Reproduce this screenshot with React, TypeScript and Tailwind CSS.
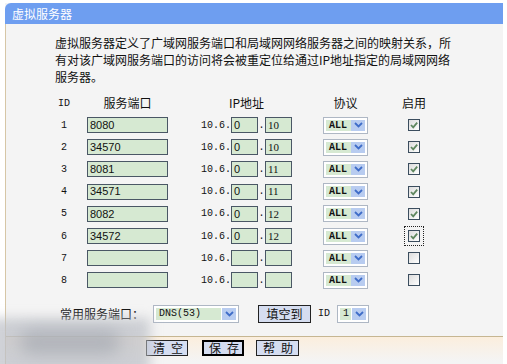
import React from "react";

const rows = [
  { id: 1, port: "8080", a: "0", b: "10", on: true },
  { id: 2, port: "34570", a: "0", b: "10", on: true },
  { id: 3, port: "8081", a: "0", b: "11", on: true },
  { id: 4, port: "34571", a: "0", b: "11", on: true },
  { id: 5, port: "8082", a: "0", b: "12", on: true },
  { id: 6, port: "34572", a: "0", b: "12", on: true, focus: true },
  { id: 7, port: "", a: "", b: "", on: false },
  { id: 8, port: "", a: "", b: "", on: false },
];

const Chevron = () => (
  <svg width="9" height="6" viewBox="0 0 9 6">
    <path d="M1 1l3.5 3.5L8 1" fill="none" stroke="#3f6dc8" strokeWidth="1.8" />
  </svg>
);

const Dropdown = ({ value, box, text }: { value: string; box: string; text: string }) => (
  <div className={`flex items-stretch border border-[#aeb7c4] bg-white p-[2px] ${box}`}>
    <span className={`flex items-center bg-[#d6e9d2] pl-[3px] font-['Liberation_Mono',monospace] text-[10px] ${text}`}>
      {value}
    </span>
    <span className="ml-auto flex w-[14px] items-center justify-center bg-[#b8ccf0]">
      <Chevron />
    </span>
  </div>
);

const Check = ({ on, focus }: { on: boolean; focus?: boolean }) => (
  <span
    className={`flex h-[12px] w-[12px] items-center justify-center border border-[#3b4d5e] bg-gradient-to-br from-[#dcdcdc] to-white ${
      focus ? "outline outline-1 outline-offset-[3px] outline-dotted outline-[#222]" : ""
    }`}
  >
    {on && (
      <svg width="10" height="10" viewBox="0 0 10 10">
        <path d="M2 5l2.2 2.3L8.2 2.6" fill="none" stroke="#5f875f" strokeWidth="1.8" />
      </svg>
    )}
  </span>
);

const Field = ({ value, w, serif }: { value: string; w: string; serif?: boolean }) => (
  <span
    className={`flex h-[16px] items-center border border-[#4a5765] bg-[#d6e9d2] pl-[2px] text-[11px] text-[#111] ${w} ${
      serif ? "font-['Liberation_Serif',serif]" : "font-['Liberation_Sans',sans-serif]"
    }`}
  >
    {value}
  </span>
);

export default function App() {
  return (
    <div className="relative h-[364px] w-[507px] overflow-hidden bg-white pl-[5px] pt-[3px] font-['Noto_Sans_CJK_SC',sans-serif] text-[12px] text-[#111]">
      <div className="h-[361px] w-[498px] bg-[#f4f4f4]">
        <div className="flex h-[21px] items-center rounded-tl-[6px] bg-[#6e9ef0] pl-[7px] text-[12px] text-white">
          虚拟服务器
        </div>
        <div className="h-[340px] border-l border-[#d6c6a6]">
          <p className="whitespace-nowrap pl-[49px] pt-[10px] leading-[17px]">
            虚拟服务器定义了广域网服务端口和局域网网络服务器之间的映射关系，所
            <br />
            有对该广域网服务端口的访问将会被重定位给通过IP地址指定的局域网网络
            <br />
            服务器。
          </p>

          {/* table */}
          <div className="mt-[7px] pl-[46px]">
            <div className="flex h-[22px] items-center">
              <span className="w-[24px] text-center font-['Liberation_Mono',monospace] text-[10px]">ID</span>
              <span className="ml-[11px] w-[81px] text-center">服务端口</span>
              <span className="ml-[33px] w-[91px] text-center">IP地址</span>
              <span className="ml-[31px] w-[45px] text-center">协议</span>
              <span className="ml-[40px] w-[12px] whitespace-nowrap text-center">
                <span className="-ml-[6px]">启用</span>
              </span>
            </div>
            {rows.map((r) => (
              <div key={r.id} className="flex h-[22.2px] items-center">
                <span className="w-[24px] text-center font-['Liberation_Mono',monospace] text-[10px]">{r.id}</span>
                <span className="ml-[11px]">
                  <Field value={r.port} w="w-[81px]" />
                </span>
                <span className="ml-[33px] w-[30px] font-['Liberation_Mono',monospace] text-[10px]">10.6.</span>
                <Field value={r.a} w="w-[27px]" />
                <span className="w-[7px] text-center font-['Liberation_Mono',monospace] text-[10px]">.</span>
                <Field value={r.b} w="w-[27px]" serif />
                <span className="ml-[31px]">
                  <Dropdown value="ALL" box="h-[17px] w-[45px]" text="w-[25px] font-bold" />
                </span>
                <span className="ml-[40px]">
                  <Check on={r.on} focus={r.focus} />
                </span>
              </div>
            ))}
          </div>

          {/* common ports */}
          <div className="mt-[12px] flex h-[20px] items-center pl-[54px]">
            <span className="w-[86px] whitespace-nowrap">常用服务端口：</span>
            <span className="ml-[7px]">
              <Dropdown value="DNS(53)" box="h-[18px] w-[86px]" text="w-[65px]" />
            </span>
            <button className="ml-[19px] h-[18px] w-[53px] border border-[#222] bg-[#d5ddf0] text-[12px] leading-none">
              填空到
            </button>
            <span className="ml-[7px] font-['Liberation_Mono',monospace] text-[10px]">ID</span>
            <span className="ml-[7px]">
              <Dropdown value="1" box="h-[18px] w-[32px]" text="w-[11px]" />
            </span>
          </div>

          <div className="mt-[12px] h-px bg-[#c6b692]" />
          <div className="flex h-[24px] items-start bg-gradient-to-b from-[#fbeedd] to-[#f4f4f4] pt-[3px] pl-[140px]">
            <button className="h-[16px] w-[42px] whitespace-nowrap border border-[#222] bg-[#d5ddf0] pl-[6px] text-left text-[12px] leading-none tracking-[6px]">
              清空
            </button>
            <button className="ml-[14px] h-[16px] w-[42px] whitespace-nowrap border-2 border-black bg-[#d5ddf0] pl-[5px] text-left text-[12px] leading-none tracking-[6px]">
              保存
            </button>
            <button className="ml-[12px] h-[16px] w-[43px] whitespace-nowrap border border-[#222] bg-[#d5ddf0] pl-[6px] text-left text-[12px] leading-none tracking-[6px]">
              帮助
            </button>
          </div>
        </div>
      </div>

      {/* blurry smudge over the lower left corner */}
      <div className="pointer-events-none absolute left-[-10px] top-[318px] h-[56px] w-[160px] bg-[#bfc2c8]/75 blur-[6px]" />
      <div className="pointer-events-none absolute left-[20px] top-[330px] h-[24px] w-[100px] rounded-full bg-[#a5aab2]/70 blur-[8px]" />
    </div>
  );
}
